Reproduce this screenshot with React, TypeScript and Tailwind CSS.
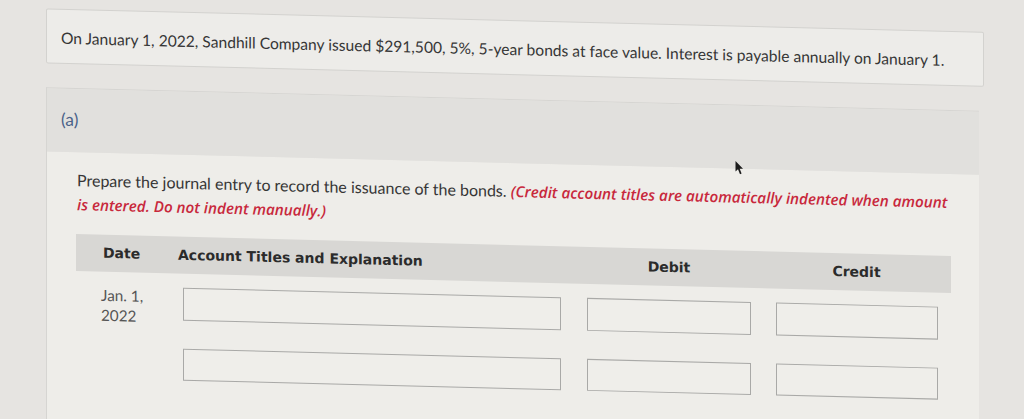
import React from "react";

export default function App() {
  const lato = { fontFamily: "Lato, 'Open Sans', sans-serif" };
  return (
    <div className="w-[1024px] h-[419px] overflow-hidden bg-[#e6e4e1]" style={lato}>
      <div className="[transform:skewY(1.43deg)] origin-[512px_210px] pl-[46px] pt-[20px]">
        {/* top card */}
        <div className="w-[938px] h-[55px] border border-[#d3d2cf] bg-[#edece9] rounded-[2px] flex items-center pl-[14px] pt-[5px] text-[15.6px] text-[#363636] font-[Lato,sans-serif]">
          On January 1, 2022, Sandhill Company issued $291,500, 5%, 5-year bonds at face value. Interest is payable annually on January 1.
        </div>

        {/* panel */}
        <div className="mt-[24px] w-[933px] border-l border-t border-[#d6d5d2]">
          <div className="relative h-[63px] bg-[#e1e0dd] flex items-center pl-[14px] text-[17.5px] text-[#4a6289] font-[Lato,sans-serif]">
            (a)
            <svg className="absolute left-[688px] top-[55px]" width="9" height="15" viewBox="0 0 9 15">
              <path d="M0.5 0.5 L0.5 11 L3 8.6 L5 13.5 L6.6 12.8 L4.7 8 L8 8 Z" fill="#1c1c1c" />
            </svg>
          </div>
          <div className="bg-[#eeede9] h-[300px] pl-[30px] pt-[16px] font-[Lato,sans-serif]">
            <p className="text-[16px] leading-[24px] text-[#363636] w-[878px]">
              Prepare the journal entry to record the issuance of the bonds.{" "}
              <span className="italic font-semibold text-[15.2px] text-[#c8283c] font-['Open_Sans',sans-serif]">
                (Credit account titles are automatically indented when amount is entered. Do not indent manually.)
              </span>
            </p>

            <div className="mt-[18px] ml-[-1px] w-[875px]">
              <div className="grid grid-cols-[102px_409px_188px_176px] h-[37px] bg-[#d8d7d4] items-center text-[14px] font-bold text-[#2b2b2b] font-['DejaVu_Sans',Verdana,sans-serif]">
                <div className="pl-[27px]">Date</div>
                <div>Account Titles and Explanation</div>
                <div className="w-[164px] text-center">Debit</div>
                <div className="w-[162px] pl-[1px] text-center">Credit</div>
              </div>

              <div className="grid grid-cols-[102px_409px_188px_176px] pt-[14px]">
                <div className="pl-[25px] text-[15.3px] leading-[20px] text-[#555] font-[Lato,sans-serif] -mt-[1px]">
                  Jan. 1,
                  <br />
                  2022
                </div>
                <div className="pl-[5px]">
                  <div className="w-[378px] h-[33px] border border-[#a9a9a7] bg-[#efeeea]" />
                </div>
                <div>
                  <div className="w-[164px] h-[33px] border border-[#a9a9a7] bg-[#efeeea]" />
                </div>
                <div className="pl-[1px]">
                  <div className="w-[162px] h-[33px] border border-[#a9a9a7] bg-[#efeeea]" />
                </div>
              </div>

              <div className="grid grid-cols-[102px_409px_188px_176px] pt-[22px]">
                <div />
                <div className="pl-[5px]">
                  <div className="w-[378px] h-[32px] border border-[#a9a9a7] bg-[#efeeea]" />
                </div>
                <div>
                  <div className="w-[164px] h-[32px] border border-[#a9a9a7] bg-[#efeeea]" />
                </div>
                <div className="pl-[1px]">
                  <div className="w-[162px] h-[32px] border border-[#a9a9a7] bg-[#efeeea]" />
                </div>
              </div>
            </div>
          </div>
        </div>
      </div>
    </div>
  );
}
